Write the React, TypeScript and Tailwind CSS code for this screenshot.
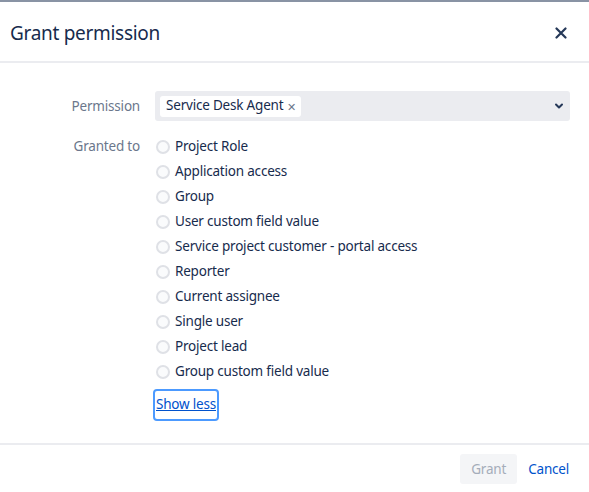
import React from "react";

const options = [
  "Project Role",
  "Application access",
  "Group",
  "User custom field value",
  "Service project customer - portal access",
  "Reporter",
  "Current assignee",
  "Single user",
  "Project lead",
  "Group custom field value",
];

export default function App() {
  return (
    <div
      className="w-[589px] h-[492px] bg-white border-t-2 border-[#8993a4] text-[#172b4d] overflow-hidden"
      style={{ fontFamily: '"Noto Sans", "Open Sans", sans-serif' }}
    >
      <div className="h-[61px] pt-[3px] flex items-center justify-between pl-[10px] pr-[22px] border-b-2 border-[#ebecf0]">
        <h1 className="text-[19px] tracking-[-0.3px] leading-6 text-[#172b4d]">Grant permission</h1>
        <svg width="12" height="12" viewBox="0 0 12 12" className="text-[#253858]">
          <path d="M1.5 1.5 L10.5 10.5 M10.5 1.5 L1.5 10.5" stroke="currentColor" strokeWidth="2.2" strokeLinecap="round" />
        </svg>
      </div>

      <div className="pt-[28px] pb-[22px] pr-[19px] text-[13.5px] tracking-[-0.2px]">
        <div className="flex items-center">
          <div className="w-[140px] text-right text-[#6b778c] shrink-0">Permission</div>
          <div className="ml-[15px] flex-1 h-[30px] bg-[#ebecf0] rounded-[3px] flex items-center justify-between pl-[5px] pr-[6px]">
            <div className="h-[21px] bg-white rounded-[3px] flex items-center pl-[6px] pr-[5px] gap-[4px]">
              <span className="text-[#172b4d] leading-none">Service Desk Agent</span>
              <span className="text-[#6b778c] text-[11px] leading-none">✕</span>
            </div>
            <svg width="10" height="8" viewBox="0 0 10 8" className="text-[#253858]">
              <path d="M2 2.5 L5 5.5 L8 2.5" stroke="currentColor" strokeWidth="2" fill="none" strokeLinecap="round" strokeLinejoin="round" />
            </svg>
          </div>
        </div>

        <div className="flex mt-[13px]">
          <div className="w-[140px] text-right text-[#6b778c] shrink-0 leading-[25px]">Granted to</div>
          <div className="ml-[15px] flex flex-col">
            {options.map((o) => (
              <label key={o} className="flex items-center h-[25px] gap-[5px]">
                <span className="w-[14px] h-[14px] ml-[1px] rounded-full border-2 border-[#dfe1e6] bg-[#fafbfc]" />
                <span className="text-[#172b4d]">{o}</span>
              </label>
            ))}
            <div className="mt-[5px] -ml-[2px] flex">
              <button className="h-[32px] px-[1px] border-2 border-[#4c9aff] rounded-[4px] text-[#0052cc] underline leading-none">
                Show less
              </button>
            </div>
          </div>
        </div>
      </div>

      <div className="border-t-2 border-[#ebecf0] h-[50px] flex items-center justify-end pr-[20px] gap-[11px] text-[13.5px] tracking-[-0.2px]">
        <button className="h-[30px] w-[57px] bg-[#f4f5f7] text-[#a5adba] rounded-[3px]">Grant</button>
        <button className="h-[30px] text-[#0052cc]">Cancel</button>
      </div>
    </div>
  );
}
